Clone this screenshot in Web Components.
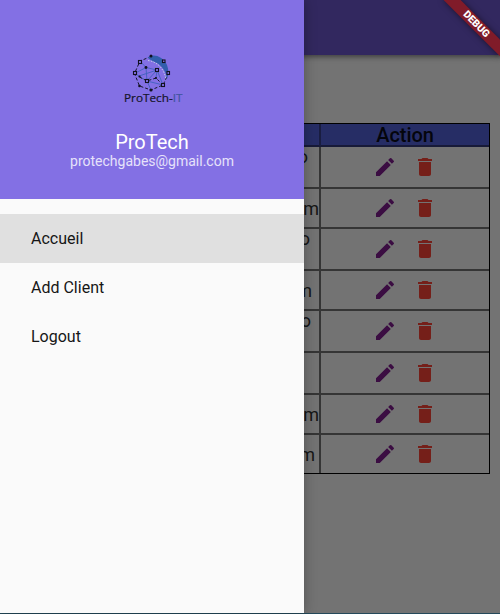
<!DOCTYPE html>
<html lang="fr">
<head>
<meta charset="utf-8">
<title>ProTech</title>
<style>
html,body{margin:0;height:100%;overflow:hidden}
body{font-family:Roboto,"Liberation Sans",sans-serif;background:#737373}
</style>
</head>
<body>
<pro-app></pro-app>
<script>
function define(name, html) {
  const t = document.createElement('template');
  t.innerHTML = html;
  customElements.define(name, class extends HTMLElement {
    constructor() {
      super();
      this.attachShadow({mode: 'open'}).appendChild(t.content.cloneNode(true));
    }
  });
}

define('edit-icon', `<style>:host{display:block;width:24px;height:24px}svg{display:block}</style>
<svg width="24" height="24" viewBox="0 0 24 24" fill="#3b0d42"><path d="M3 17.25V21h3.75L17.81 9.94l-3.75-3.75L3 17.25zM20.71 7.04a1 1 0 0 0 0-1.41l-2.34-2.34a1 1 0 0 0-1.41 0l-1.83 1.83 3.75 3.75 1.83-1.83z"/></svg>`);

define('delete-icon', `<style>:host{display:block;width:24px;height:24px}svg{display:block}</style>
<svg width="24" height="24" viewBox="0 0 24 24" fill="#751f19"><path d="M6 19c0 1.1.9 2 2 2h8c1.1 0 2-.9 2-2V7H6v12zM19 4h-3.500l-1-1h-5l-1 1H5v2h14V4z"/></svg>`);

define('app-bar', `<style>:host{display:block;height:55px;background:#32285f;box-shadow:0 2px 4px rgba(0,0,0,.3),0 1px 8px rgba(0,0,0,.2);flex:none}</style>`);

define('table-row', `<style>
:host{display:grid;grid-template-columns:308px 1fr;height:var(--h,42px);box-sizing:border-box;border-top:2px solid #353535;color:#161616;font-size:18px;line-height:20px}
.mail{border-right:2px solid #353535;display:flex;align-items:center;justify-content:flex-end;padding-top:2px;padding-right:var(--pr,1px);white-space:nowrap}
:host([wrap]) .mail{align-items:flex-start;padding-top:0}
.act{display:flex;align-items:center;gap:16px;padding-left:52px}
</style><div class="mail"><slot></slot></div><div class="act"><edit-icon></edit-icon><delete-icon></delete-icon></div>`);

define('client-table', `<style>
:host{display:block;box-sizing:border-box;width:478px;height:351px;margin:68px 0 0 12px;border:1px solid #000}
.head{display:grid;grid-template-columns:308px 1fr;height:21px;background:#262d65;color:#04050c;font-size:20px;line-height:22px;font-weight:500;text-align:center}
.head i{border-right:2px solid #191d40}
.head span{letter-spacing:-.1px}
.head+table-row{border-top-color:#171a38}
</style>
<div class="head"><i></i><span>Action</span></div>
<table-row wrap style="--h:42px;--pr:11px">o</table-row>
<table-row style="--h:40px;--pr:0px">m</table-row>
<table-row wrap style="--h:42px;--pr:9px">o</table-row>
<table-row style="--h:40px;--pr:7px">m</table-row>
<table-row wrap style="--h:42px;--pr:8px">o</table-row>
<table-row style="--h:42px"></table-row>
<table-row style="--h:40px;--pr:0px">m</table-row>
<table-row style="--h:40px;--pr:4px">m</table-row>`);

define('pro-logo', `<style>:host{display:block;width:62px;height:54px}svg{display:block}</style>
<svg width="62" height="54" viewBox="121 52 62 54">
<g fill="none" stroke="#3f62bd" stroke-width=".9">
<path d="M146 67.500L157 70M146 67.500L140 61M146 67.500L147 81M146 67.500L134.500 73.500M157 70L147 81M157 70L163 85M147 81L163 85M147 81L140 77M147 81L151 90M134.500 73.500L139 76L157 70M156 78L157 70"/></g>
<g fill="none" stroke="#17172c" stroke-width="1" stroke-dasharray="3 2">
<path d="M151 56.500L140 61L134.500 73.500L139.500 86L151 90L163 85L168.500 73.500L163 61M139.500 77L147 81L156 78L163 85"/></g>
<path d="M147.500 57.500C153 53 163 56 167 65C169 70 168.500 75 167 79C166.500 71 161 65 156 62.500C152 60.500 150 60 147.500 57.500Z" fill="#315eac"/>
<path d="M148 60.500C158 62 164 69 166 79" fill="none" stroke="#c3d0e6" stroke-width="1" stroke-dasharray="1.500 1.300"/>
<g fill="#8370e4" stroke="#11111f" stroke-width="1.100"><rect x="138.500" y="60.500" width="3" height="3"/><rect x="133.500" y="71.500" width="3" height="3"/><rect x="155.500" y="68.500" width="3" height="3"/><rect x="145.500" y="79.500" width="3" height="3"/><rect x="161.500" y="83.500" width="3" height="3"/><rect x="167" y="71.500" width="2.500" height="3"/><rect x="162.500" y="60" width="2.500" height="2.500"/></g>
<g fill="#11111f"><circle cx="151" cy="56" r="1.500"/><circle cx="146" cy="67.500" r="1.400"/><circle cx="151" cy="90" r="1.600"/><circle cx="139.500" cy="76.500" r="1.100"/><circle cx="139.500" cy="86" r="1.300"/><circle cx="156" cy="78" r="1.100"/></g>
<text x="124" y="102" font-family="Open Sans, sans-serif" font-size="11.500" textLength="58.500" lengthAdjust="spacingAndGlyphs" fill="#14142a" stroke="#14142a" stroke-width=".2">ProTech-<tspan fill="#41549f" stroke="#41549f">IT</tspan></text>
</svg>`);

define('drawer-header', `<style>
:host{display:flex;flex-direction:column;align-items:center;box-sizing:border-box;height:199px;padding-top:52px;background:#8370e4;color:#fff;flex:none}
.name{font-size:20px;line-height:24px;margin-top:24px}
.mail{font-size:14px;line-height:16px;margin-top:-1px;color:#e6e2fa}
</style><pro-logo></pro-logo><div class="name"><slot name="name"></slot></div><div class="mail"><slot name="mail"></slot></div>`);

define('drawer-item', `<style>
:host{display:flex;align-items:center;height:49px;padding-left:31px;font-size:16px;color:#161616}
:host([selected]){background:#e0e0e0}
</style><slot></slot>`);

define('side-drawer', `<style>
:host{position:absolute;left:0;top:0;width:304px;height:613px;display:flex;flex-direction:column;background:#fafafa;box-shadow:0 0 12px rgba(0,0,0,.3)}
nav{padding-top:15px}
</style>
<drawer-header><span slot="name">ProTech</span><span slot="mail">protechgabes@gmail.com</span></drawer-header>
<nav><drawer-item selected>Accueil</drawer-item><drawer-item>Add Client</drawer-item><drawer-item>Logout</drawer-item></nav>`);

define('debug-banner', `<style>
:host{position:absolute;right:0;top:0;width:80px;height:80px;overflow:hidden}
div{position:absolute;left:40px;top:27.500px;width:80px;height:12px;transform-origin:40px -27.500px;transform:rotate(45deg);background:#801b29;box-shadow:0 0 6px rgba(0,0,0,.5);color:#fff;font-size:10.200px;line-height:12px;font-weight:900;text-align:center}
</style><div>DEBUG</div>`);

define('pro-app', `<style>
:host{display:flex;flex-direction:column;position:relative;width:500px;height:614px;overflow:hidden;background:#737373}
footer{height:1px;background:#24495a;margin-top:auto}
</style><app-bar></app-bar><client-table></client-table><footer></footer><side-drawer></side-drawer><debug-banner></debug-banner>`);
</script>
</body>
</html>
